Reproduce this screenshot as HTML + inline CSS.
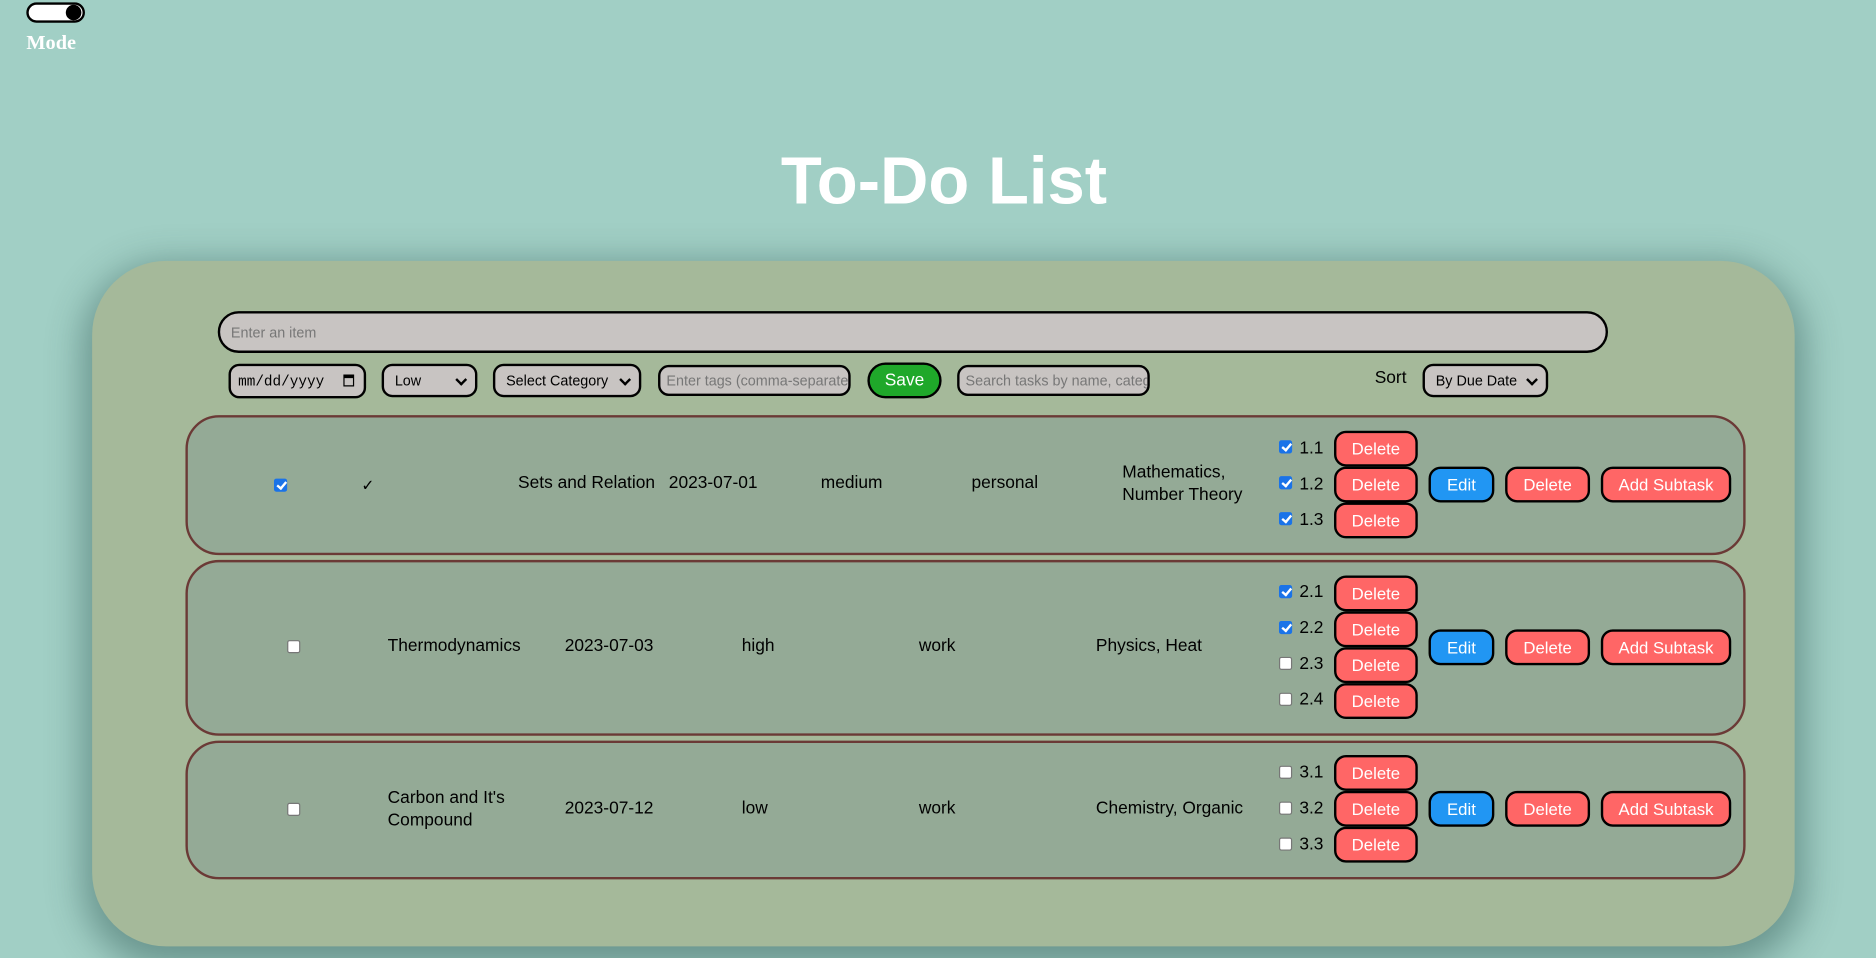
<!DOCTYPE html>
<html><head><meta charset="utf-8"><style>
html,body{margin:0;padding:0;width:1876px;height:958px;overflow:hidden;background:#a1cfc5;}
#w{position:absolute;left:0;top:0;width:1568px;height:801px;transform:scale(1.19643);transform-origin:0 0;font-family:"Liberation Sans",Arial,sans-serif;}
.a{position:absolute;}
.tog{left:22px;top:2px;width:45px;height:13px;border:2px solid #000;border-radius:9px;background:#fff;}
.tog:after{content:"";position:absolute;right:1px;top:0;width:13px;height:13px;border-radius:50%;background:#000;}
.mode{left:22px;top:26px;font-family:"Liberation Serif",serif;font-weight:bold;color:#fff;font-size:17px;}
.title{left:0;width:1578px;top:118px;text-align:center;color:#fff;font-weight:bold;font-size:56px;}
.box{left:77px;top:218px;width:1423px;height:573px;background:#a5b99a;border-radius:62px;box-shadow:0 10px 30px 8px rgba(40,80,75,.45);}
.inp{border:2px solid #000;background:#c8c4c2;box-sizing:border-box;font-size:12px;color:#777;display:flex;align-items:center;padding-left:9px;overflow:hidden;white-space:nowrap;}
.sel{color:#000;}
.row{left:155px;width:1304px;background:#94aa96;border:2px solid #6b3a36;border-radius:28px;box-sizing:border-box;}
.t{font-size:14.5px;color:#000;line-height:19px;}
.btn{box-sizing:border-box;border:2px solid #000;border-radius:10px;background:#ff6666;color:#fff;font-size:14px;height:30px;display:flex;align-items:center;justify-content:center;}
.cb{width:11px;height:11px;border-radius:2px;box-sizing:border-box;background:#fff;border:1px solid #777;}
.cb.on{background:#1a73e8;border-color:#1a73e8;}
.cb.on:after{content:"";position:absolute;left:3px;top:0px;width:3px;height:6px;border:solid #fff;border-width:0 2px 2px 0;transform:rotate(40deg);}
.chev{position:absolute;right:8px;top:8px;width:5px;height:5px;border:solid #000;border-width:0 2px 2px 0;transform:rotate(45deg);}
</style></head><body><div id="w">
<div class="a tog"></div>
<div class="a mode">Mode</div>
<div class="a title">To-Do List</div>
<div class="a box"></div>
<div class="a inp" style="left:182px;top:260px;width:1162px;height:35px;border-radius:18px;">Enter an item</div>
<div class="a inp sel" style="left:191px;top:304px;width:115px;height:29px;border-radius:9px;font-family:'Liberation Mono',monospace;font-size:12px;padding-left:6px;">mm/dd/yyyy<span style="position:absolute;right:8px;top:7px;width:9px;height:10px;border:1.5px solid #000;border-top-width:3px;box-sizing:border-box;"></span></div>
<div class="a inp sel" style="left:319px;top:304px;width:80px;height:28px;border-radius:9px;">Low<span class="chev"></span></div>
<div class="a inp sel" style="left:412px;top:304px;width:124px;height:28px;border-radius:9px;">Select Category<span class="chev"></span></div>
<div class="a inp" style="left:550px;top:305px;width:161px;height:26px;border-radius:9px;padding-left:5px;">Enter tags (comma-separated)</div>
<div class="a btn" style="left:725px;top:303px;width:62px;height:30px;border-radius:15px;background:#1fa82a;font-size:14.5px;">Save</div>
<div class="a inp" style="left:800px;top:305px;width:161px;height:26px;border-radius:9px;padding-left:5px;">Search tasks by name, category</div>
<div class="a t" style="left:1149px;top:307px;">Sort</div>
<div class="a inp sel" style="left:1189px;top:304px;width:105px;height:28px;border-radius:9px;">By Due Date<span class="chev"></span></div>

<div class="a row" style="top:347px;height:117px;"></div>
<div class="a row" style="top:468px;height:147px;"></div>
<div class="a row" style="top:619px;height:116px;"></div>

<!-- row1 -->
<div class="a cb on" style="left:229px;top:400px;"></div>
<div class="a t" style="left:302px;top:396px;font-size:13px;">✓</div>
<div class="a t" style="left:433px;top:395px;">Sets and Relation</div>
<div class="a t" style="left:559px;top:395px;">2023-07-01</div>
<div class="a t" style="left:686px;top:395px;">medium</div>
<div class="a t" style="left:812px;top:395px;">personal</div>
<div class="a t" style="left:938px;top:386px;">Mathematics,<br>Number Theory</div>
<div class="a cb on" style="left:1069px;top:368px;"></div><div class="a t" style="left:1086px;top:366px;">1.1</div>
<div class="a btn" style="left:1115px;top:360px;width:70px;">Delete</div>
<div class="a cb on" style="left:1069px;top:398px;"></div><div class="a t" style="left:1086px;top:396px;">1.2</div>
<div class="a btn" style="left:1115px;top:390px;width:70px;">Delete</div>
<div class="a cb on" style="left:1069px;top:428px;"></div><div class="a t" style="left:1086px;top:426px;">1.3</div>
<div class="a btn" style="left:1115px;top:420px;width:70px;">Delete</div>
<div class="a btn" style="left:1194px;top:390px;width:55px;background:#2196f3;">Edit</div>
<div class="a btn" style="left:1258px;top:390px;width:71px;">Delete</div>
<div class="a btn" style="left:1338px;top:390px;width:109px;">Add Subtask</div>

<!-- row2 -->
<div class="a cb" style="left:240px;top:535px;"></div>
<div class="a t" style="left:324px;top:531px;">Thermodynamics</div>
<div class="a t" style="left:472px;top:531px;">2023-07-03</div>
<div class="a t" style="left:620px;top:531px;">high</div>
<div class="a t" style="left:768px;top:531px;">work</div>
<div class="a t" style="left:916px;top:531px;">Physics, Heat</div>
<div class="a cb on" style="left:1069px;top:489px;"></div><div class="a t" style="left:1086px;top:486px;">2.1</div>
<div class="a btn" style="left:1115px;top:481px;width:70px;">Delete</div>
<div class="a cb on" style="left:1069px;top:519px;"></div><div class="a t" style="left:1086px;top:516px;">2.2</div>
<div class="a btn" style="left:1115px;top:511px;width:70px;">Delete</div>
<div class="a cb" style="left:1069px;top:549px;"></div><div class="a t" style="left:1086px;top:546px;">2.3</div>
<div class="a btn" style="left:1115px;top:541px;width:70px;">Delete</div>
<div class="a cb" style="left:1069px;top:579px;"></div><div class="a t" style="left:1086px;top:576px;">2.4</div>
<div class="a btn" style="left:1115px;top:571px;width:70px;">Delete</div>
<div class="a btn" style="left:1194px;top:526px;width:55px;background:#2196f3;">Edit</div>
<div class="a btn" style="left:1258px;top:526px;width:71px;">Delete</div>
<div class="a btn" style="left:1338px;top:526px;width:109px;">Add Subtask</div>

<!-- row3 -->
<div class="a cb" style="left:240px;top:671px;"></div>
<div class="a t" style="left:324px;top:658px;">Carbon and It's<br>Compound</div>
<div class="a t" style="left:472px;top:667px;">2023-07-12</div>
<div class="a t" style="left:620px;top:667px;">low</div>
<div class="a t" style="left:768px;top:667px;">work</div>
<div class="a t" style="left:916px;top:667px;">Chemistry, Organic</div>
<div class="a cb" style="left:1069px;top:640px;"></div><div class="a t" style="left:1086px;top:637px;">3.1</div>
<div class="a btn" style="left:1115px;top:631px;width:70px;">Delete</div>
<div class="a cb" style="left:1069px;top:670px;"></div><div class="a t" style="left:1086px;top:667px;">3.2</div>
<div class="a btn" style="left:1115px;top:661px;width:70px;">Delete</div>
<div class="a cb" style="left:1069px;top:700px;"></div><div class="a t" style="left:1086px;top:697px;">3.3</div>
<div class="a btn" style="left:1115px;top:691px;width:70px;">Delete</div>
<div class="a btn" style="left:1194px;top:661px;width:55px;background:#2196f3;">Edit</div>
<div class="a btn" style="left:1258px;top:661px;width:71px;">Delete</div>
<div class="a btn" style="left:1338px;top:661px;width:109px;">Add Subtask</div>
</div></body></html>
